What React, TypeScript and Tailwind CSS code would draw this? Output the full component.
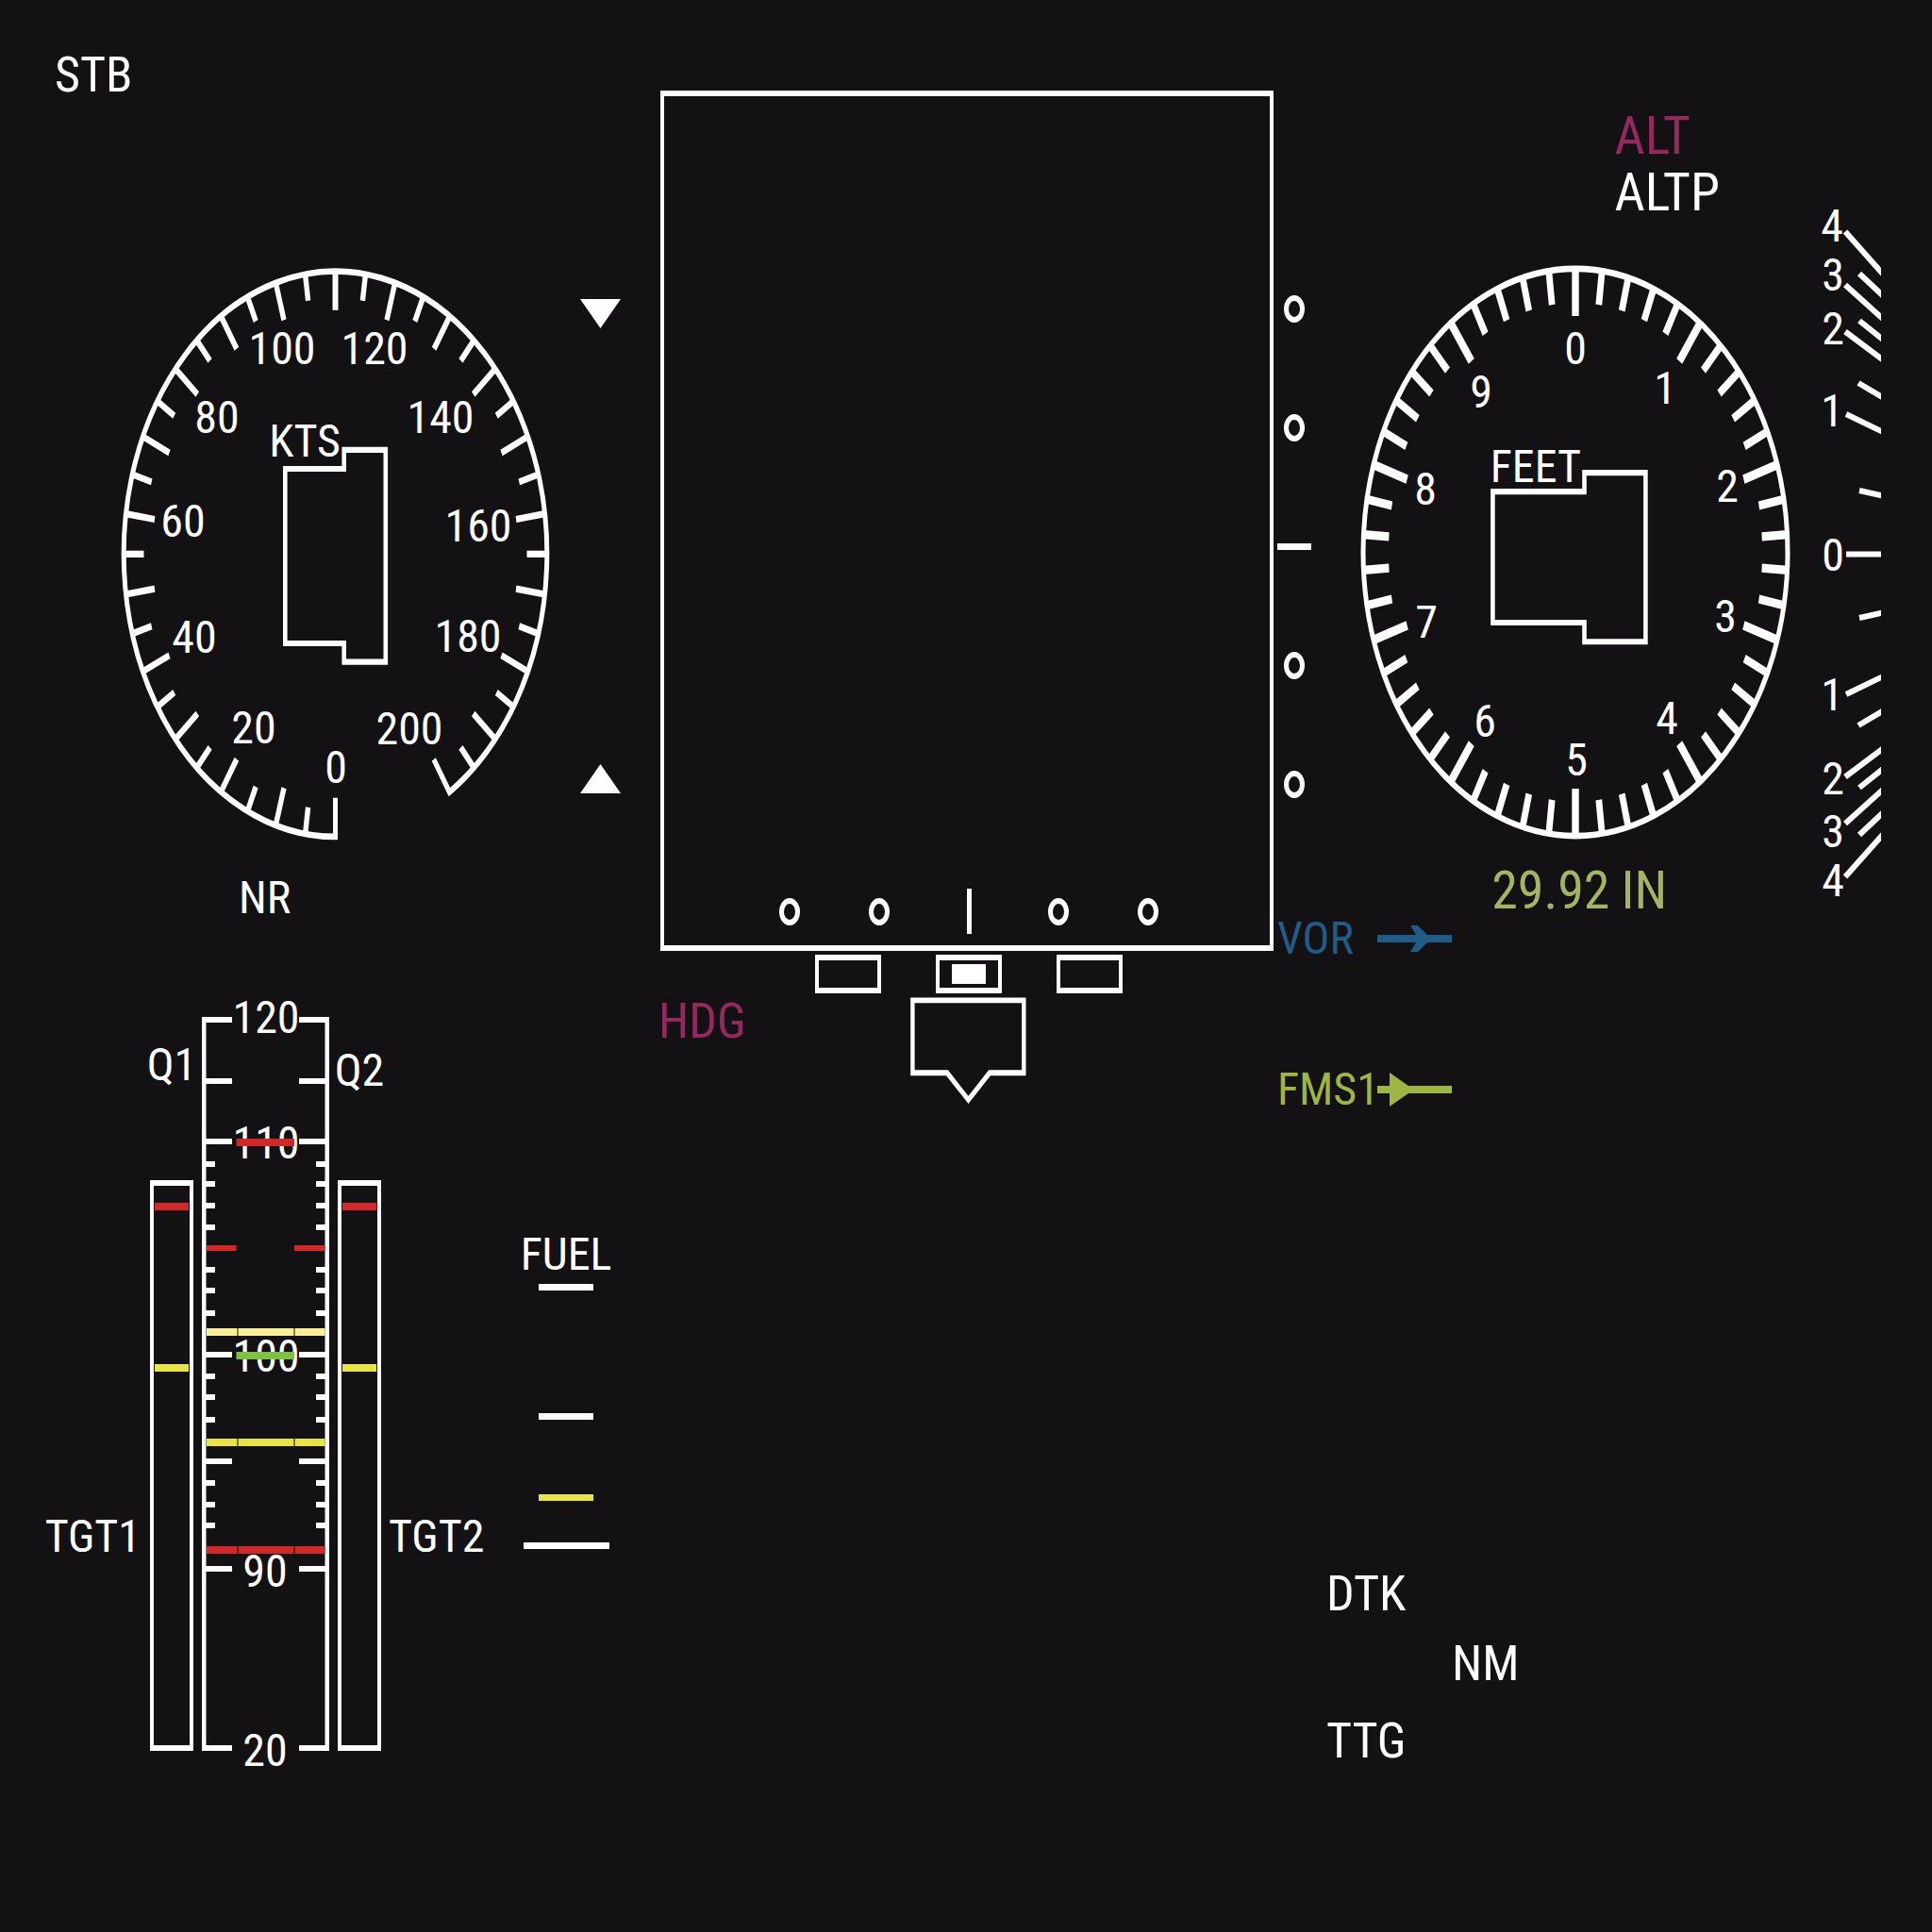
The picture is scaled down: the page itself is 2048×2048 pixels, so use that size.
import type { ReactNode } from "react";

const ASPECT = 1.336;

type Label = { text: string; x: number; y: number; anchor?: "start" | "middle" | "end" };

function Labels({ items }: { items: Label[] }) {
  return (
    <g className="fill-white stroke-none text-5xl">
      {items.map((l) => (
        <text key={`${l.text}-${l.x}-${l.y}`} x={l.x} y={l.y + 17} textAnchor={l.anchor ?? "middle"}>
          {l.text}
        </text>
      ))}
    </g>
  );
}

function Tick({ deg, inner, outer, width }: { deg: number; inner: number; outer: number; width: number }) {
  const a = (deg * Math.PI) / 180;
  return (
    <line
      x1={inner * Math.sin(a)}
      y1={-inner * Math.cos(a)}
      x2={outer * Math.sin(a)}
      y2={-outer * Math.cos(a)}
      strokeWidth={width}
    />
  );
}

const speedLabels: Label[] = [
  { text: "0", x: 356, y: 813 },
  { text: "20", x: 269, y: 771 },
  { text: "40", x: 206, y: 675 },
  { text: "60", x: 194, y: 552 },
  { text: "80", x: 230, y: 442 },
  { text: "100", x: 299, y: 369 },
  { text: "120", x: 397, y: 369 },
  { text: "140", x: 467, y: 442 },
  { text: "160", x: 507, y: 557 },
  { text: "180", x: 496, y: 674 },
  { text: "200", x: 434, y: 772 },
  { text: "KTS", x: 361, y: 467, anchor: "end" },
];

function SpeedDial() {
  const step = 90 / 11;
  const r = 224.3;
  const end = ((18 * step + 0.1) * Math.PI) / 180;
  const ticks = Array.from({ length: 39 }, (_, i) => i - 21);
  return (
    <svg viewBox="110 270 490 630" className="w-full" role="img" aria-label="Airspeed, knots">
      <g transform={`translate(355.5 587.3) scale(1 ${ASPECT})`} fill="none" stroke="white" strokeWidth="5">
        <path
          d={`M0 193.5V${r}A${r} ${r} 0 1 1 ${r * Math.sin(end)} ${-r * Math.cos(end)}L${193.5 * Math.sin(end)} ${-193.5 * Math.cos(end)}`}
        />
        {ticks.map((i) => (
          <Tick key={i} deg={i * step} inner={i % 2 === 0 ? 193.5 : 203} outer={r} width={i === 0 ? 6 : 5.4} />
        ))}
        <path d="M-53.2 -67.6H9.2V-82.6H53.3V85.6H9.2V70.9H-53.2Z" strokeWidth="4.6" />
      </g>
      <Labels items={speedLabels} />
    </svg>
  );
}

const altitudeLabels: Label[] = [
  { text: "0", x: 1670, y: 369 },
  { text: "1", x: 1765, y: 411 },
  { text: "2", x: 1831, y: 515 },
  { text: "3", x: 1829, y: 653 },
  { text: "4", x: 1767, y: 761 },
  { text: "5", x: 1671, y: 805 },
  { text: "6", x: 1574, y: 764 },
  { text: "7", x: 1512, y: 659 },
  { text: "8", x: 1511, y: 518 },
  { text: "9", x: 1570, y: 415 },
  { text: "FEET", x: 1676, y: 494, anchor: "end" },
];

function AltitudeDial() {
  const ticks = Array.from({ length: 50 }, (_, i) => i);
  return (
    <svg viewBox="1404 270 521 630" className="mt-9 w-full" role="img" aria-label="Altitude, feet">
      <g transform={`translate(1670 585.5) scale(1 ${ASPECT})`} fill="none" stroke="white">
        <circle r="225" strokeWidth="5" />
        {ticks.map((i) => (
          <Tick key={i} deg={i * 7.2} inner={i % 5 === 0 ? 187.5 : 198} outer={225} width={i % 5 === 0 ? 7.4 : 6.8} />
        ))}
        <path d="M-87.6 -48.2H9.5V-63.2H74.4V70.9H9.5V55.8H-87.6Z" strokeWidth="4.6" />
      </g>
      <Labels items={altitudeLabels} />
    </svg>
  );
}

const speedScaleLabels: Label[] = [
  { text: "4", x: 1942, y: 239 },
  { text: "3", x: 1943, y: 291 },
  { text: "2", x: 1943, y: 348 },
  { text: "1", x: 1942, y: 435 },
  { text: "0", x: 1943, y: 588 },
  { text: "1", x: 1942, y: 736 },
  { text: "2", x: 1943, y: 825 },
  { text: "3", x: 1943, y: 881 },
  { text: "4", x: 1943, y: 933 },
];

/* [start x, start offset, end offset] measured from the zero mark */
const vsiMarks = [
  [1956, 342, 297],
  [1971, 297.5, 274],
  [1956, 285.5, 249.5],
  [1971, 247.5, 227.5],
  [1956, 236, 206],
  [1970, 181.5, 166],
  [1957, 148.5, 129.5],
  [1971, 67.5, 62],
];

function VerticalSpeed() {
  return (
    <svg viewBox="1925 205 69 764" className="mt-[205px] w-full" role="img" aria-label="Vertical speed">
      <g stroke="white" strokeWidth="6">
        {vsiMarks.map(([x, a, b]) => (
          <g key={a}>
            <line x1={x} y1={587.5 - a} x2="1996" y2={587.5 - b} />
            <line x1={x} y1={587.5 + a} x2="1996" y2={587.5 + b} />
          </g>
        ))}
        <line x1="1957" y1="587.5" x2="1996" y2="587.5" />
      </g>
      <Labels items={speedScaleLabels} />
    </svg>
  );
}

const majorMarks = [1081, 1146, 1210, 1436, 1549, 1663, 1853];
const minorMarks = [1234, 1255, 1278, 1301, 1346, 1368, 1392, 1459, 1481, 1505, 1572, 1595, 1617];

function SplitBar({ y, className }: { y: number; className: string }) {
  return (
    <g className={className}>
      <rect x="219" y={y} width="32.5" height="8" />
      <rect x="252.5" y={y} width="59" height="8" />
      <rect x="312.5" y={y} width="32" height="8" />
    </g>
  );
}

function TorqueGauge() {
  return (
    <svg viewBox="214 1045 135 846" className="w-full" role="img" aria-label="Torque, percent">
      <g className="fill-white">
        <rect x="214" y="1078" width="4.5" height="778" />
        <rect x="344.5" y="1078" width="4.5" height="778" />
        {majorMarks.map((y) => (
          <g key={y}>
            <rect x="214" y={y - 3} width="32" height="6" />
            <rect x="317" y={y - 3} width="32" height="6" />
          </g>
        ))}
        {minorMarks.map((y) => (
          <g key={y}>
            <rect x="214" y={y - 3} width="14" height="6" />
            <rect x="335" y={y - 3} width="14" height="6" />
          </g>
        ))}
      </g>
      <g className="fill-[#d22827]">
        <rect x="219" y="1320" width="31.5" height="6" />
        <rect x="312" y="1320" width="32.5" height="6" />
      </g>
      <SplitBar y={1408} className="fill-[#f8ee9a]" />
      <SplitBar y={1525} className="fill-[#e8e446]" />
      <SplitBar y={1639} className="fill-[#d22827]" />
      <Labels
        items={[
          { text: "120", x: 282, y: 1078 },
          { text: "110", x: 282, y: 1211 },
          { text: "100", x: 282, y: 1437 },
          { text: "90", x: 281, y: 1665 },
          { text: "20", x: 281, y: 1855 },
        ]}
      />
      <rect x="250.5" y="1207" width="61.5" height="8" className="fill-[#d22827]" />
      <rect x="250.5" y="1433" width="61.5" height="8" className="fill-[#7dc240]" />
    </svg>
  );
}

function TemperatureBar({ label }: { label: string }) {
  return (
    <div
      role="img"
      aria-label={label}
      className="h-[605px] w-full border-x-[4px] border-y-[6px] border-white px-px pt-[18px]"
    >
      <div className="h-2 bg-[#d22827]" />
      <div className="mt-[163px] h-2 bg-[#e8e446]" />
    </div>
  );
}

function Dot() {
  return <span className="block h-[29px] w-[22px] rounded-[50%] border-x-[5px] border-y-[6px] border-white" />;
}

function SlipBox({ children }: { children?: ReactNode }) {
  return (
    <div className="flex h-[41px] w-[70px] items-center justify-center border-x-[4px] border-y-[6px] border-white">
      {children}
    </div>
  );
}

function NavSource({ name, className, children }: { name: string; className: string; children: ReactNode }) {
  return (
    <div className={`flex h-[52px] items-center pl-1 ${className}`}>
      <span className="w-[106px] whitespace-nowrap">{name}</span>
      <svg viewBox="0 0 79 40" className="h-10 w-[79px] fill-current" aria-hidden="true">
        {children}
      </svg>
    </div>
  );
}

export default function App() {
  return (
    <main className="grid min-h-screen grid-cols-[minmax(0,700fr)_minmax(0,650fr)_minmax(0,698fr)] items-start overflow-hidden bg-[#131114] font-['Roboto_Condensed',Roboto,sans-serif] text-5xl leading-[52px] text-white">
      <section className="pt-[50px]">
        <p className="pl-[58px] text-[52px] leading-[60px]">STB</p>

        <div className="mt-40 grid grid-cols-[110fr_490fr_15fr_43fr_42fr]">
          <div className="col-start-2">
            <SpeedDial />
          </div>
          <div className="col-start-4 flex flex-col justify-between pt-[47px] pb-[59px]">
            <svg viewBox="0 0 43 31" className="w-full fill-white" aria-hidden="true">
              <path d="M0 0H43L21.5 31Z" />
            </svg>
            <svg viewBox="0 0 43 31" className="w-full fill-white" aria-hidden="true">
              <path d="M0 31H43L21.5 0Z" />
            </svg>
          </div>
        </div>

        <p className="mt-[26px] pl-[253px]">NR</p>

        <div className="mt-[67px] grid grid-cols-[minmax(0,159fr)_minmax(0,46fr)_minmax(0,9fr)_minmax(0,135fr)_minmax(0,9fr)_minmax(0,46fr)_minmax(0,138fr)_minmax(0,116fr)_minmax(0,42fr)] whitespace-nowrap">
          <div className="flex justify-end pt-[558px] pr-2.5">
            <p>TGT1</p>
          </div>
          <div className="flex flex-col items-center">
            <p className="mt-[58px] mb-24">Q1</p>
            <TemperatureBar label="Turbine gas temperature, engine 1" />
          </div>
          <div className="col-start-4">
            <TorqueGauge />
          </div>
          <div className="col-start-6 flex flex-col items-center">
            <p className="mt-16 mb-[90px]">Q2</p>
            <TemperatureBar label="Turbine gas temperature, engine 2" />
          </div>
          <p className="pt-[558px] pl-2">TGT2</p>
          <div className="flex flex-col items-center pt-[259px]">
            <p>FUEL</p>
            <div className="mt-[5px] h-[7px] w-[58px] bg-white" />
            <div className="mt-[130px] h-[7px] w-[58px] bg-white" />
            <div className="mt-[79px] h-[7px] w-[58px] bg-[#e8e446]" />
            <div className="mt-11 h-[7px] w-[91px] bg-white" />
          </div>
        </div>
      </section>

      <section className="pt-24">
        <div className="flex h-[912px] flex-col justify-end border-x-[4px] border-y-[6px] border-white pb-3 pl-1">
          <div className="flex justify-center">
            <span className="flex w-[95px] items-center justify-center"><Dot /></span>
            <span className="flex w-[95px] items-center justify-center"><Dot /></span>
            <span className="flex w-[95px] justify-center">
              <span className="h-12 w-[5px] bg-white" />
            </span>
            <span className="flex w-[95px] items-center justify-center"><Dot /></span>
            <span className="flex w-[95px] items-center justify-center"><Dot /></span>
          </div>
        </div>
        <div className="mt-1 flex justify-center gap-[58px] pl-1">
          <SlipBox />
          <SlipBox>
            <span className="h-[21px] w-9 bg-white" />
          </SlipBox>
          <SlipBox />
        </div>
        <div className="mt-0.5 grid grid-cols-3 justify-items-center pl-1">
          <p className="-ml-1.5 justify-self-start text-[52px] leading-[56px] text-[#94295f]">HDG</p>
          <svg viewBox="0 0 127 120" className="h-[120px] w-[127px]" role="img" aria-label="Heading pointer">
            <g transform={`scale(1 ${ASPECT})`} fill="none" stroke="white" strokeWidth="4.4">
              <path d="M4.4 4H122.3V61.6H86L63.5 83L41 61.6H4.4Z" />
            </g>
          </svg>
        </div>
      </section>

      <section>
        <div className="grid grid-cols-[54fr_521fr_69fr_54fr] items-start">
          <div className="mt-[313px] flex h-[533px] flex-col items-center justify-between pr-2.5">
            <Dot />
            <Dot />
            <span className="flex h-[29px] items-center">
              <span className="h-[7px] w-9 bg-white" />
            </span>
            <Dot />
            <Dot />
          </div>
          <div className="pt-[114px]">
            <p className="pl-[59%] text-[56px] leading-[60px] text-[#94295f]">ALT</p>
            <p className="pl-[59%] text-[56px] leading-[60px]">ALTP</p>
            <AltitudeDial />
            <p className="mt-[19px] flex gap-3 pl-[34%] text-[56px] leading-[50px] text-[#a3b564]">
              <span>29.92</span>
              <span>IN</span>
            </p>
          </div>
          <VerticalSpeed />
        </div>

        <NavSource name="VOR" className="text-[#205c85]">
          <path d="M0 16H41L35 6H43L53 16H79V24H53L43 34H35L41 24H0Z" />
        </NavSource>
        <NavSource name="FMS1" className="mt-[108px] text-[#9db644]">
          <path d="M0 16H13V2L33 16H79V24H33L13 38V24H0Z" />
        </NavSource>

        <div className="mt-[479px] pl-14 text-[52px] leading-[60px]">
          <p>DTK</p>
          <p className="mt-3.5 pl-[133px]">NM</p>
          <p className="mt-[22px]">TTG</p>
        </div>
      </section>
    </main>
  );
}
